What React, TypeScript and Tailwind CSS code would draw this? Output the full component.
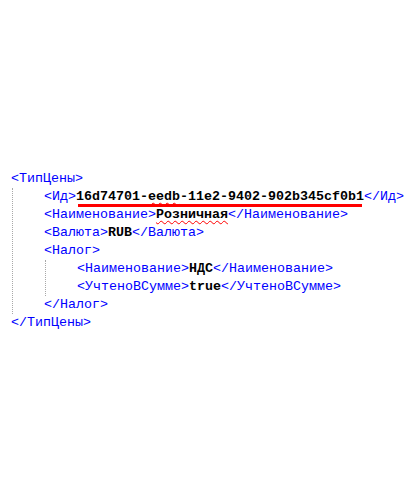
const Tag = ({ children }: { children: React.ReactNode }) => (
  <span className="text-[#0000ff]">{children}</span>
);

const Val = ({ children }: { children: React.ReactNode }) => (
  <span className="font-bold text-black">{children}</span>
);

const Squiggle = ({ children }: { children: React.ReactNode }) => (
  <span className="underline decoration-wavy decoration-[#ff0000] decoration-1 underline-offset-2">{children}</span>
);

const Line = ({ children }: { children: React.ReactNode }) => (
  <div className="h-[18px] leading-[18px] whitespace-pre">{children}</div>
);

// indent block with dotted guide on the left
const Block = ({ children }: { children: React.ReactNode }) => (
  <div className="ml-[1px] border-l border-dotted border-[#a8a8a8] pl-[31px]">{children}</div>
);

export default function App() {
  return (
    <div
      className="w-[418px] h-[500px] bg-white pt-[170px] pl-[11px] text-[13.33px]"
      style={{ fontFamily: '"Liberation Mono", "Courier New", monospace' }}
    >
      <Line>
        <Tag>&lt;ТипЦены&gt;</Tag>
      </Line>
      <Block>
        <Line>
          <Tag>&lt;Ид&gt;</Tag>
          <span className="relative">
            <Val>
              16d74701-<Squiggle>eedb</Squiggle>-11e2-9402-902b345cf0b1
            </Val>
            {/* red marker under the id */}
            <span className="absolute left-[2px] right-[2px] top-[15px] h-[3px] bg-[#ff0000]" />
          </span>
          <Tag>&lt;/Ид&gt;</Tag>
        </Line>
        <Line>
          <Tag>&lt;Наименование&gt;</Tag>
          <Val>
            <Squiggle>Розничная</Squiggle>
          </Val>
          <Tag>&lt;/Наименование&gt;</Tag>
        </Line>
        <Line>
          <Tag>&lt;Валюта&gt;</Tag>
          <Val>RUB</Val>
          <Tag>&lt;/Валюта&gt;</Tag>
        </Line>
        <Line>
          <Tag>&lt;Налог&gt;</Tag>
        </Line>
        <Block>
          <Line>
            <Tag>&lt;Наименование&gt;</Tag>
            <Val>НДС</Val>
            <Tag>&lt;/Наименование&gt;</Tag>
          </Line>
          <Line>
            <Tag>&lt;УчтеноВСумме&gt;</Tag>
            <Val>true</Val>
            <Tag>&lt;/УчтеноВСумме&gt;</Tag>
          </Line>
        </Block>
        <Line>
          <Tag>&lt;/Налог&gt;</Tag>
        </Line>
      </Block>
      <Line>
        <Tag>&lt;/ТипЦены&gt;</Tag>
      </Line>
    </div>
  );
}
